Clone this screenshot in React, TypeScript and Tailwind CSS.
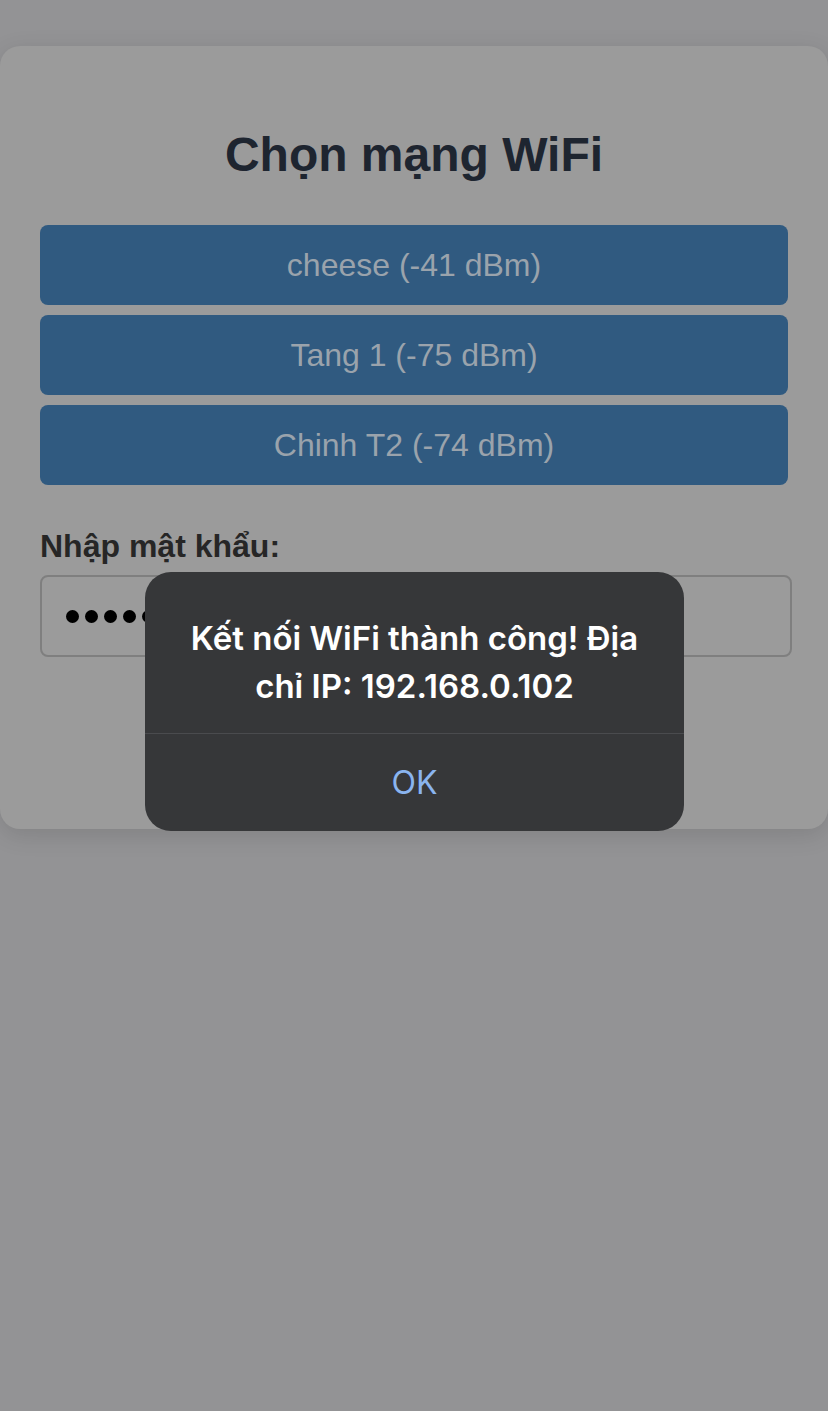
import React from 'react';

const networks = ['cheese (-41 dBm)', 'Tang 1 (-75 dBm)', 'Chinh T2 (-74 dBm)'];

const App: React.FC = () => {
  return (
    <div className="relative min-h-[1411px] w-full bg-[#939395] pt-[46px]" style={{ fontFamily: '"Liberation Sans", Arial, sans-serif' }}>
      {/* WiFi card (dimmed by the alert backdrop) */}
      <div className="rounded-[20px] bg-[#9b9b9b] px-10 pb-[172px] pt-[75px] shadow-[0_6px_24px_rgba(0,0,0,0.12)]">
        <h1 className="mb-[36px] text-center text-[48px] font-bold leading-[68px] text-[#1e2530]">Chọn mạng WiFi</h1>

        <div className="flex flex-col gap-[10px]">
          {networks.map((n) => (
            <button
              key={n}
              className="h-[80px] w-full rounded-[8px] bg-[#305a80] text-[32px] text-[#9aa3ac]"
            >
              {n}
            </button>
          ))}
        </div>

        <label className="mt-[40px] block text-[32px] font-bold leading-[42px] text-[#262626]">Nhập mật khẩu:</label>
        <div className="mt-[8px] flex h-[82px] w-[752px] items-center gap-[6px] rounded-[8px] border-2 border-[#7f7f7f] pl-[24px]">
          {[0, 1, 2, 3, 4, 5, 6, 7].map((i) => (
            <span key={i} className="h-[13px] w-[13px] rounded-full bg-black" />
          ))}
        </div>
      </div>

      {/* Alert dialog */}
      <div
        className="absolute left-[145px] top-[572px] flex w-[539px] flex-col rounded-[26px] bg-[#363739]"
        style={{ fontFamily: 'Inter, "Noto Sans", sans-serif' }}
      >
        <p className="px-[44px] pb-[23px] pt-[42px] text-center text-[33px] font-semibold leading-[48px] text-white">
          Kết nối WiFi thành công! Địa chỉ IP: 192.168.0.102
        </p>
        <div className="h-px bg-[#4a4b4e]" />
        <button className="h-[97px] text-center text-[32px] text-[#8ab4ef]">OK</button>
      </div>
    </div>
  );
};

export default App;
